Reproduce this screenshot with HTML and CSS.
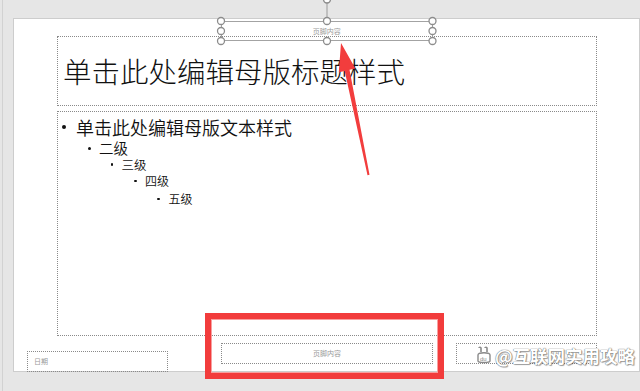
FILE: index.html
```html
<!DOCTYPE html>
<html lang="zh-CN">
<head>
<meta charset="utf-8">
<title>幻灯片母版</title>
<link rel="stylesheet" href="styles.css">
</head>
<body>
<div class="app">
  <div class="workspace">
    <div class="slide">
      <div class="ph title-ph"><span class="title-text">单击此处编辑母版标题样式</span></div>
      <ul class="ph body-ph">
        <li class="lv lv1"><span class="dot"></span>单击此处编辑母版文本样式</li>
        <li class="lv lv2"><span class="dot"></span>二级</li>
        <li class="lv lv3"><span class="dot"></span>三级</li>
        <li class="lv lv4"><span class="dot"></span>四级</li>
        <li class="lv lv5"><span class="dot"></span>五级</li>
      </ul>
      <div class="footer-row">
        <div class="ph small-ph date-ph">日期</div>
        <div class="ph small-ph foot-ph">页脚内容</div>
        <div class="ph small-ph num-ph">‹#›</div>
      </div>
    </div>
  </div>

  <div class="sel-box">页脚内容</div>

  <svg class="overlay" width="640" height="391" viewBox="0 0 640 391">
    <line x1="327" y1="3" x2="327" y2="17.5" stroke="#9a9a9a" stroke-width="1"/>
    <g fill="#fff" stroke="#8c8c8c" stroke-width="1.3">
      <circle cx="327" cy="-0.5" r="3.5"/>
      <circle cx="221" cy="21" r="3.5"/>
      <circle cx="327" cy="21" r="3.5"/>
      <circle cx="432.5" cy="21" r="3.5"/>
      <circle cx="221" cy="31" r="3.5"/>
      <circle cx="432.5" cy="31" r="3.5"/>
      <circle cx="221" cy="41" r="3.5"/>
      <circle cx="327" cy="41" r="3.5"/>
      <circle cx="432.5" cy="41" r="3.5"/>
    </g>
    <polygon fill="#f23d3d" points="341,43 355.4,68.4 349.5,69.8 369.5,174.8 367.5,175.2 344.7,70.9 338.8,72.2"/>
    <rect x="208" y="316" width="233" height="60" fill="none" stroke="#f23c3c" stroke-width="6"/>
    <rect x="211.5" y="319.5" width="226" height="53" fill="none" stroke="#f8a0a0" stroke-width="1"/>
  </svg>

  <div class="watermark">
    <svg class="wm-icon" width="16" height="18" viewBox="0 0 16 18">
      <path d="M3 2 C3 1 5 1 5 2 L5 6 M9 2 C9 1 11 1 11 2 L11 6" fill="none" stroke="#8a8a8a" stroke-width="1.6"/>
      <path d="M2 9 C2 6 14 6 14 9 L14 15 C14 17 2 17 2 15 Z" fill="#fff" stroke="#8a8a8a" stroke-width="1.4"/>
      <text x="4" y="15" font-size="6" font-family="Liberation Sans, sans-serif" fill="#8a8a8a">du</text>
    </svg>
    <span class="wm-text">@互联网实用攻略</span>
  </div>
</div>
</body>
</html>
```

FILE: styles.css
```css
* { box-sizing: border-box; }
html, body {
  margin: 0;
  padding: 0;
  width: 640px;
  height: 391px;
  overflow: hidden;
  background: #e6e6e6;
  font-family: "Noto Sans CJK SC", "Noto Sans", sans-serif;
}
.app {
  position: relative;
  width: 640px;
  height: 391px;
}
.workspace {
  margin-left: 2px;
  height: 391px;
  border-left: 1px solid #d2d2d2;
  padding: 18px 0 0 10px;
}
.slide {
  width: 627px;
  height: 354px;
  background: #fff;
  border: 1px solid #cdcdcd;
  padding: 17px 0 0 43px;
}
.ph {
  border: 1px dotted #8a8a8a;
}
.title-ph {
  width: 540px;
  height: 70px;
  display: flex;
  align-items: center;
  padding-left: 5px;
}
.title-text {
  font-size: 28.5px;
  font-weight: 300;
  color: #111;
  line-height: 1;
  white-space: nowrap;
}
.body-ph {
  list-style: none;
  margin: 5px 0 0 0;
  padding: 4px 0 0 0;
  width: 540px;
  height: 225px;
  color: #111;
}
.lv {
  display: flex;
  align-items: center;
  white-space: nowrap;
}
.dot {
  display: inline-block;
  border-radius: 50%;
  background: #111;
  flex: none;
}
.lv1 { font-size: 18px; line-height: 22px; padding-left: 4px; font-weight: 350; }
.lv1 .dot { width: 4px; height: 4px; margin-right: 10px; }
.lv2 { font-size: 14.5px; line-height: 20px; padding-left: 29.5px; font-weight: 350; }
.lv2 .dot { width: 3px; height: 3px; margin-right: 8.5px; }
.lv3 { font-size: 12.5px; line-height: 13px; padding-left: 52.5px; font-weight: 350; }
.lv3 .dot { width: 2.6px; height: 2.6px; margin-right: 8.5px; }
.lv4 { font-size: 12px; line-height: 20px; padding-left: 76px; font-weight: 350; }
.lv4 .dot { width: 2.5px; height: 2.5px; margin-right: 8.5px; }
.lv5 { font-size: 12px; line-height: 16px; padding-left: 99px; font-weight: 350; }
.lv5 .dot { width: 2.5px; height: 2.5px; margin-right: 9px; }

.footer-row {
  display: flex;
  align-items: flex-start;
  margin: 7px 0 0 -30px;
}
.small-ph {
  height: 21px;
  font-size: 7px;
  color: #9a9a9a;
  display: flex;
  align-items: center;
  line-height: 1;
}
.date-ph {
  width: 141px;
  margin-top: 8px;
  padding-left: 6px;
}
.foot-ph {
  width: 212px;
  margin-left: 53px;
  justify-content: center;
}
.num-ph {
  width: 141px;
  margin-left: 23px;
  justify-content: flex-end;
  padding-right: 6px;
  font-size: 6px;
}

.sel-box {
  position: absolute;
  left: 221px;
  top: 21px;
  width: 211.5px;
  height: 20px;
  border: 1px solid #a3a3a3;
  font-size: 7px;
  color: #9a9a9a;
  display: flex;
  justify-content: center;
  align-items: center;
  line-height: 1;
}
.overlay {
  position: absolute;
  left: 0;
  top: 0;
  overflow: visible;
  pointer-events: none;
}
.watermark {
  position: absolute;
  left: 476px;
  top: 343px;
  display: flex;
  align-items: center;
  gap: 3px;
  height: 24px;
}
.wm-text {
  font-size: 17.5px;
  font-weight: 700;
  color: #fff;
  white-space: nowrap;
  letter-spacing: 0;
  text-shadow: 0 0 1px #6f6f6f, 0 0 1px #6f6f6f, 1px 1px 1px rgba(0,0,0,0.35);
}
```
